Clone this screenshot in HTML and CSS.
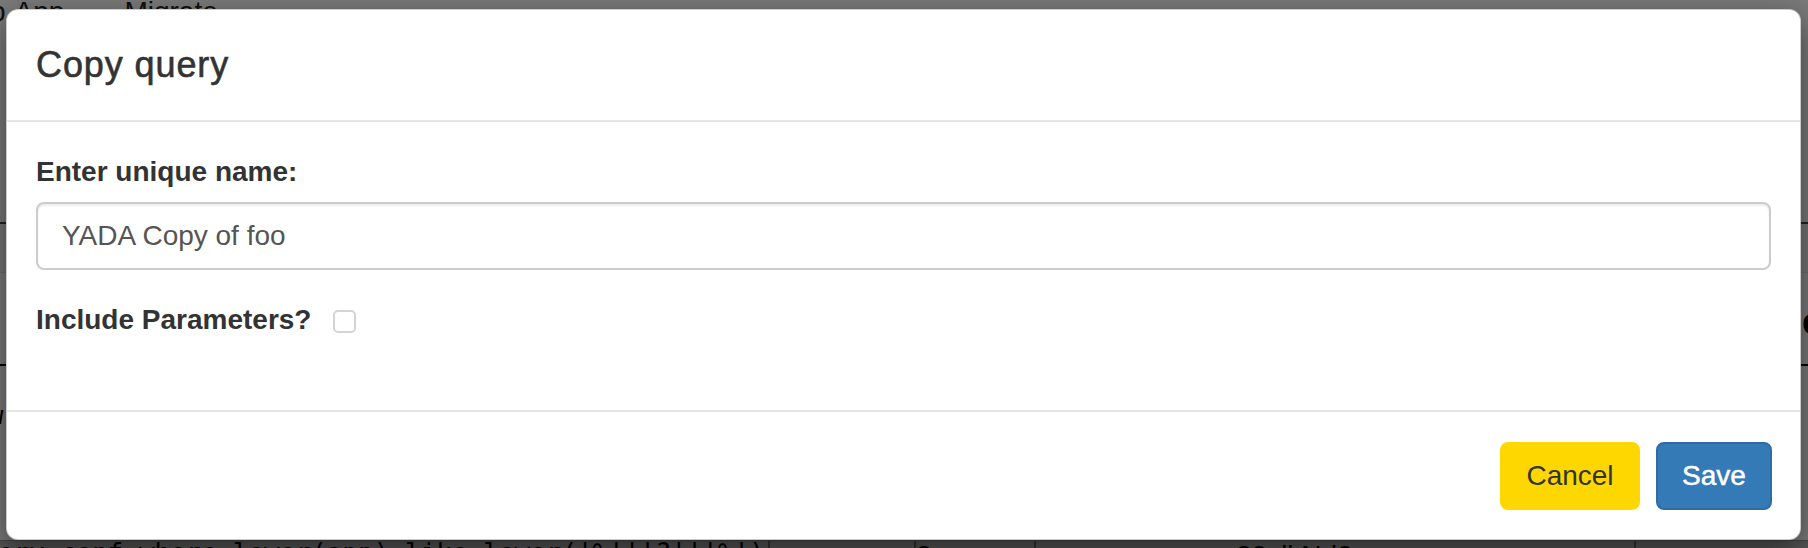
FILE: index.html
```html
<!DOCTYPE html>
<html lang="en">
<head>
<meta charset="utf-8">
<title>Copy query</title>
<link rel="stylesheet" href="styles.css">
</head>
<body>
<div class="page">
  <nav class="tabs">
    <span class="tab tab-cut">p</span>
    <span class="tab">App</span>
    <span class="tab">Migrate</span>
  </nav>
  <div class="band band-a"></div>
  <div class="band band-b"><span class="side-letter">e</span></div>
  <div class="band band-c"><span class="side-w">w</span></div>
  <div class="result-row">
    <code class="query">ery conf where lower(app) like lower('%'||?||'%')</code>
    <span class="cell cell-1"></span>
    <span class="cell cell-2">3</span>
    <span class="cell cell-3">30vlkNd0</span>
  </div>
</div>
<div class="backdrop"></div>

<div class="modal">
  <div class="modal-header">
    <h4 class="modal-title">Copy query</h4>
  </div>
  <div class="modal-body">
    <div class="form-group">
      <label class="field-label" for="qname">Enter unique name:</label>
      <input class="form-control" id="qname" type="text" value="YADA Copy of foo">
    </div>
    <div class="check-row">
      <label class="field-label" for="incl">Include Parameters?</label>
      <span class="checkbox" id="incl"></span>
    </div>
  </div>
  <div class="modal-footer">
    <button class="btn btn-cancel">Cancel</button>
    <button class="btn btn-save">Save</button>
  </div>
</div>
</body>
</html>
```

FILE: styles.css
```css
* { box-sizing: border-box; }

html, body {
  margin: 0;
  padding: 0;
  width: 1808px;
  height: 548px;
  overflow: hidden;
}

body {
  font-family: "Liberation Sans", Arial, Helvetica, sans-serif;
  color: #333;
  background: #f4f4f4;
  position: relative;
}

/* ---------- page beneath the backdrop ---------- */
.page {
  display: flex;
  flex-direction: column;
  height: 548px;
  overflow: hidden;
}

.page > * { flex-shrink: 0; }

.tabs {
  display: flex;
  height: 222px;
  margin-left: -10px;
}

.tab {
  font-size: 28px;
  line-height: 28px;
  margin-top: -2px;
  color: #222;
  margin-right: 60px;
}

.tab-cut { margin-right: 9px; }

.band { position: relative; }

.band-a {
  height: 50px;
  border-top: 2px solid #444;
  background: #ececec;
}

.band-b {
  height: 92px;
  border-top: 1px solid #ddd;
  background: #f4f4f4;
}

.side-letter {
  position: absolute;
  right: -14px;
  top: 28px;
  font-size: 36px;
  font-weight: bold;
  color: #000;
}

.band-c {
  height: 176px;
  border-top: 2px solid #000;
  background: #f4f4f4;
}

.side-w {
  position: absolute;
  left: -12px;
  top: 36px;
  font-family: "Liberation Mono", monospace;
  font-size: 26px;
  color: #000;
}

.result-row {
  display: flex;
  height: 8px;
  overflow: hidden;
  background: #aaa;
  border-top: 1px solid #888;
}

.query {
  font-family: "DejaVu Sans Mono", "Liberation Mono", monospace;
  font-size: 26px;
  line-height: 30px;
  margin-top: -3px;
  margin-left: -2px;
  color: #000;
  width: 772px;
  white-space: nowrap;
  overflow: hidden;
  border-right: 2px solid #666;
}

.cell {
  border-right: 2px solid #666;
  font-size: 28px;
  line-height: 30px;
  color: #000;
}

.cell-1 { width: 146px; }
.cell-2 { width: 120px; }
.cell-3 { width: 600px; padding-left: 200px; }

.backdrop {
  position: absolute;
  inset: 0;
  background: rgba(0, 0, 0, 0.5);
}

/* ---------- modal ---------- */
.modal {
  position: absolute;
  left: 6px;
  top: 9px;
  width: 1795px;
  background: #fff;
  border: 1px solid rgba(0, 0, 0, 0.2);
  border-radius: 12px;
  box-shadow: 0 10px 30px rgba(0, 0, 0, 0.5);
  display: flex;
  flex-direction: column;
}

.modal-header {
  padding: 30px 29px;
  border-bottom: 2px solid #e5e5e5;
}

.modal-title {
  margin: 0;
  font-size: 36px;
  font-weight: 500;
  line-height: 50px;
  letter-spacing: 0.9px;
  color: #333;
  -webkit-text-stroke: 0.6px #333;
}

.modal-body {
  padding: 30px 29px 30px;
  display: flex;
  flex-direction: column;
}

.form-group {
  display: flex;
  flex-direction: column;
  margin-bottom: 30px;
}

.field-label {
  font-size: 28px;
  font-weight: bold;
  line-height: 40px;
  color: #333;
}

.form-group .field-label { margin-bottom: 10px; }

.form-control {
  height: 68px;
  width: 100%;
  padding: 12px 24px;
  font-family: inherit;
  font-size: 28px;
  color: #555;
  background: #fff;
  border: 2px solid #ccc;
  border-radius: 8px;
  box-shadow: inset 0 2px 2px rgba(0, 0, 0, 0.075);
  outline: none;
}

.check-row {
  display: flex;
  align-items: center;
  gap: 22px;
  margin-bottom: 40px;
}

.checkbox {
  width: 23px;
  height: 23px;
  border: 2px solid #d4d4d4;
  border-radius: 5px;
  background: #fff;
  margin-top: 2px;
}

.modal-footer {
  padding: 30px 28px 29px;
  border-top: 2px solid #e5e5e5;
  display: flex;
  justify-content: flex-end;
  gap: 16px;
}

.btn {
  height: 68px;
  padding: 12px 24px;
  font-family: inherit;
  font-size: 28px;
  line-height: 40px;
  border-radius: 8px;
  border: 2px solid transparent;
}

.btn-cancel {
  width: 140px;
  background: #ffd700;
  border-color: #ffd700;
  color: #333;
}

.btn-save {
  width: 116px;
  background: #337ab7;
  border-color: #2e6da4;
  color: #fff;
  -webkit-text-stroke: 0.5px #fff;
}
```
